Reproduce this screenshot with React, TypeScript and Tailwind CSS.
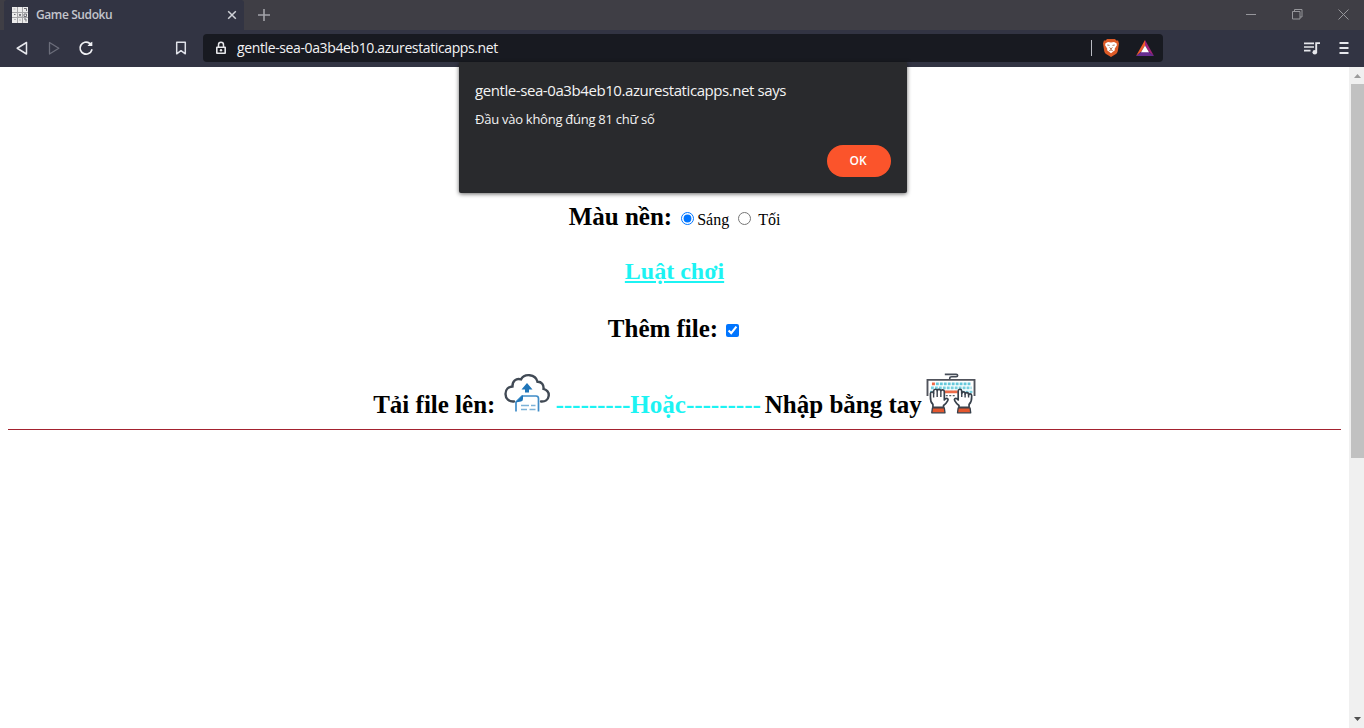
import React from "react";

function Favicon() {
  return (
    <svg className="size-4 shrink-0" viewBox="0 0 16 16">
      <rect width="16" height="16" fill="#ececec" />
      <path d="M5.500 0v16M10.500 0v16M0 5.500h16M0 10.500h16" stroke="#a5a5a8" />
      <path d="M12 1.500h2.500v2.500M7 7l2 2.500M9 7L7 9.500M12 7h2.500v2.500H12zM2 7.500h1.500M12 12h2v2.500" fill="none" stroke="#6f6f76" />
      <path d="M1.500 2h2M2 12.500h2M7 13h2" stroke="#b5b5b8" />
    </svg>
  );
}

function TabBar() {
  return (
    <div className="flex h-[30px] bg-[#3f3e45] pl-1">
      <div className="flex w-[240px] items-center rounded-t-[3px] bg-[#323443] pl-2">
        <Favicon />
        <span className="ml-2 w-[180px] whitespace-nowrap text-[12px] font-semibold leading-4 tracking-[-0.4px] text-[#c3c5cc]">Game Sudoku</span>
        <svg className="ml-[11px] size-[10px]" viewBox="0 0 10 10">
          <path d="M1.2 1.2l7.6 7.6M8.800 1.2l-7.6 7.6" stroke="#d0d2d8" strokeWidth="1.5" />
        </svg>
      </div>
      <div className="flex w-10 items-center justify-center">
        <svg className="size-3" viewBox="0 0 12 12">
          <path d="M6 0v12M0 6h12" stroke="#a3a3a9" strokeWidth="1.6" />
        </svg>
      </div>
      <div className="ml-auto flex items-center gap-[35px] pb-px pr-[15px]">
        <svg className="size-[11px]" viewBox="0 0 11 11"><path d="M0 5.5h10" stroke="#96969b" /></svg>
        <svg className="size-[11px]" viewBox="0 0 11 11" fill="none" stroke="#96969b">
          <path d="M.5 2.500h7.500v7.500h-7.500zM2.500 2.500v-2h7.500v7.500h-2" />
        </svg>
        <svg className="size-[11px]" viewBox="0 0 11 11"><path d="M.5.5l10 10M10.500.5l-10 10" stroke="#96969b" /></svg>
      </div>
    </div>
  );
}

function BraveLogo() {
  return (
    <svg className="h-[18px] w-4" viewBox="0 0 16 18">
      <path d="M4 0h8l1.300 1.400 1.800.2.900 3-1.200 7.300c-.3 1.700-1.200 2.500-2.300 3.400L8 18l-4.500-2.700c-1.100-.9-2-1.700-2.300-3.400L0 4.600l.9-3 1.800-.2z" fill="#dd5a26" />
      <path d="M2.500 4.200l2.500-1.200 3 .5 3-.5 2.500 1.200.4 2-2.200 3.500.2 1.500L8 14.200l-3.900-3 .2-1.500L2.100 6.200z" fill="#fff" />
      <path d="M4.300 6l2.200.4M11.700 6l-2.200.4M6.500 8.500L8 9.800l1.500-1.300M8 9.500v1.300M6.300 11.700l1.700-.9 1.700.9" fill="none" stroke="#a8603f" strokeWidth=".9" />
    </svg>
  );
}

function Toolbar() {
  return (
    <div className="flex h-[37px] items-center bg-[#323443] pb-px">
      <svg className="ml-4 h-4 w-3" viewBox="0 0 12 16" fill="none">
        <path d="M10.500 2.500v11.500L1.200 8.250z" stroke="#e6e7ec" strokeWidth="1.500" strokeLinejoin="round" />
      </svg>
      <svg className="ml-5 h-4 w-3" viewBox="0 0 12 16" fill="none">
        <path d="M1.500 2.500v11.500l9.300-5.750z" stroke="#6b6d7a" strokeWidth="1.300" strokeLinejoin="round" />
      </svg>
      <svg className="ml-[18px] size-4" viewBox="0 0 16 16" fill="none">
        <path d="M11.500 3.200A6 6 0 1 0 13.800 9.900" stroke="#f0f1f5" strokeWidth="1.700" strokeLinecap="round" />
        <path d="M9.500 6h4.800V1.800L12 3z" fill="#f0f1f5" />
      </svg>
      <svg className="ml-[81px] h-4 w-3" viewBox="0 0 12 16" fill="none">
        <path d="M1.700 2.200h8.600v11.600L6 10.700l-4.300 3.100z" stroke="#dfe1e8" strokeWidth="1.500" strokeLinejoin="round" />
      </svg>
      <div className="ml-4 flex h-7 w-[960px] items-center rounded-[4px] bg-[#181a21] pl-3">
        <svg className="h-[14px] w-3" viewBox="0 0 12 14">
          <path d="M3.500 6V3.700a2.500 2.500 0 0 1 5 0V6" fill="none" stroke="#e6e7ea" strokeWidth="1.500" />
          <path fillRule="evenodd" d="M2 5.500h8q1 0 1 1v5.500q0 1-1 1H2q-1 0-1-1V6.500q0-1 1-1zM2.600 7v4.500h6.800V7z" fill="#e6e7ea" />
          <circle cx="6" cy="9.200" r="1.200" fill="#e6e7ea" />
        </svg>
        <span className="ml-[10px] whitespace-nowrap text-[14px] leading-5 tracking-[-0.38px] text-[#f2f2f4]">gentle-sea-0a3b4eb10.azurestaticapps.net</span>
        <div className="ml-auto flex items-center pr-[9px]">
          <div className="h-4 w-px bg-[#b9bbc2]" />
          <div className="ml-[11px]"><BraveLogo /></div>
          <svg className="ml-[17px] h-4 w-[18px]" viewBox="0 0 18 16">
            <path d="M9 0L0 16l5-4 4-6.500z" fill="#f05a2b" />
            <path d="M9 0l9 16-5-4-4-6.500z" fill="#a2227a" />
            <path d="M0 16h18l-5-4H5z" fill="#662d91" />
            <path d="M9 5.500L5 12.300h8z" fill="#fff" />
          </svg>
        </div>
      </div>
      <div className="ml-auto flex items-center pr-[15px]">
        <svg className="h-[13px] w-[17px]" viewBox="0 0 17 13">
          <path d="M0 1.300h10M0 5h10M0 8.700h6.500" stroke="#e6e7ec" strokeWidth="1.700" />
          <path d="M12.200 10V1.100h3.800" fill="none" stroke="#e6e7ec" strokeWidth="1.900" />
          <circle cx="10.800" cy="10.200" r="2.300" fill="#e6e7ec" />
        </svg>
        <svg className="ml-[18px] h-3 w-[10px]" viewBox="0 0 10 12">
          <path d="M.5 1h9M.5 6h9M.5 11h9" stroke="#e6e7ec" strokeWidth="2" />
        </svg>
      </div>
    </div>
  );
}

function AlertDialog() {
  return (
    <div className="absolute left-[459px] top-[62px] z-10 flex h-[131px] w-[448px] flex-col rounded-b-[2px] bg-[#292a2d] px-4 pt-[17px] text-[#f3f3f3] shadow-[0_1px_4px_rgba(0,0,0,0.6)]">
      <div className="whitespace-nowrap text-[15px] leading-[22px] tracking-[-0.42px]">gentle-sea-0a3b4eb10.azurestaticapps.net says</div>
      <div className="mt-2 whitespace-nowrap text-[13px] leading-5 tracking-[-0.26px]">Đầu vào không đúng 81 chữ số</div>
      <button className="mt-4 flex h-8 w-16 items-center justify-center self-end rounded-full bg-[#fb542b] pr-[2px] text-[12px] font-semibold text-white">OK</button>
    </div>
  );
}

function CloudUpload() {
  return (
    <svg className="h-[40px] w-[46px] shrink-0" viewBox="0 0 46 40" fill="none">
      <path d="M10 28.500C5 29 1.500 25.500 1.500 21s3-7.200 7-7.500C8.300 8 12 5 17 6.400c3-6 14.500-6 16.500 2.400 4-.2 6.500 3 6 7 4 1.200 5.500 4 5.200 7-.5 4-3.700 6-7.700 5.700" stroke="#414a55" strokeWidth="2.400" strokeLinecap="round" />
      <path d="M23 10l-5.500 6.500H21v3h4v-3h3.500z" fill="#1f75b8" />
      <path d="M12 38.500V29l6-6H32c2 0 2.500 1 2.500 2.500v13" stroke="#3f8cc8" strokeWidth="1.700" />
      <path d="M11.500 29.500l7.500-7.500V26q0 2-2 2.500z" fill="#1f75b8" />
      <path d="M17 32.500h8M27 32.500h4.500M17 36.500h6M25.500 36.500h6" stroke="#7cb2d8" strokeWidth="1.400" />
    </svg>
  );
}

function LeftHand() {
  return (
    <g stroke="#37404b" strokeWidth="1.700" strokeLinejoin="round">
      <path d="M7 34.500v-3c-2-2-2.700-4.500-2.500-7.500v-3.500c.2-2 3-2 3.200 0v-2.500c.2-2.300 3.300-2.300 3.600-.3.400-2 3.500-1.800 3.700.4 .5-2 3.500-1.600 3.500.6V27l1.200-1.200c1.600-1.200 3.200.2 2.300 1.800-1.200 2.300-2.700 3.800-4.300 5v2z" fill="#fff" />
      <path d="M7.700 20.500v4M11.300 18v6M15 18.500v5.500" strokeWidth="1.400" />
      <path d="M6.500 35h12l.7 5H5.800z" fill="#e4572e" strokeWidth="1.300" />
    </g>
  );
}

function RightHand() {
  return (
    <g stroke="#37404b" strokeWidth="1.700" strokeLinejoin="round">
      <path d="M43.500 34.500v-3c2-2 2.800-4.500 2.600-7.500v-1.500c-.2-2-2.900-2-3.100-.3v-1c-.2-2-3.200-2-3.500-.2v-.8c-.4-1.800-3.200-1.800-3.400.2V18c-.4-2.500-3.600-2.300-3.600.2V27l-1.200-1.200c-1.600-1.200-3.200.2-2.300 1.800 1.200 2.300 2.700 3.800 4.300 5v2z" fill="#fff" />
      <path d="M43 22.200v2.300M39.500 21v3.500M36.100 20v4" strokeWidth="1.400" />
      <path d="M32.500 35h12l.7 5H31.800z" fill="#e4572e" strokeWidth="1.300" />
    </g>
  );
}

function Keyboard() {
  return (
    <svg className="h-[41px] w-[50px] shrink-0" viewBox="0 0 50.500 41" fill="none">
      <path d="M26 6.500V5c0-1.200-1-1.500-2-1.500h-4.500c-2 0-2-2.300 0-2.300H31" stroke="#454c57" strokeWidth="1.600" transform="translate(50 0) scale(-1 1)" />
      <path d="M1.500 23V6.700H49V23" stroke="#51545c" strokeWidth="1.900" />
      <path d="M10 10.800h35" stroke="#65c8db" strokeWidth="2.600" strokeDasharray="2.900 1.100" />
      <path d="M5 14.800h41" stroke="#78d0df" strokeWidth="2.600" strokeDasharray="2.900 1.100" />
      <path d="M4 18.800h43" stroke="#78d0df" strokeWidth="2.200" strokeDasharray="2.900 1.100" />
      <path d="M6 10.800h3M18 18.800h14" stroke="#ed6b48" strokeWidth="2.700" />
      <path d="M20 22.700h10" stroke="#52606a" strokeWidth="1.300" strokeDasharray="2 1.500" />
      <LeftHand />
      <RightHand />
    </svg>
  );
}

function Scrollbar() {
  return (
    <div className="flex w-[15px] flex-col items-center bg-[#f0f0f0]">
      <div className="flex h-[17px] items-center pl-px">
        <svg className="h-1 w-[7px]" viewBox="0 0 7 4"><path d="M0 4l3.500-4L7 4z" fill="#9b9b9b" /></svg>
      </div>
      <div className="h-[374px] w-[13px] translate-x-px bg-[#c1c1c1]" />
      <div className="mt-auto flex h-[18px] items-center pl-px">
        <svg className="h-1 w-[7px]" viewBox="0 0 7 4"><path d="M0 0h7L3.500 4z" fill="#505050" /></svg>
      </div>
    </div>
  );
}

const heading = "text-[25px] font-bold leading-[30px] whitespace-pre";

export default function App() {
  return (
    <div className="relative flex h-[728px] w-[1364px] flex-col overflow-hidden bg-white font-['Open_Sans','Noto_Sans',sans-serif]">
      <TabBar />
      <Toolbar />
      <div className="flex flex-1">
        <main className="flex-1 px-2 pt-[135px] font-['Liberation_Serif',serif] text-black">
          <div className="flex h-[30px] justify-center">
            <span className={heading}>Màu nền:</span>
            <label className="ml-[9px] flex items-center pt-1 text-[16px]">
              <input type="radio" name="theme" defaultChecked className="mb-px mr-[3px] size-[13px] accent-[#0075ff]" />
              <span className="pt-px">Sáng</span>
            </label>
            <label className="ml-[9px] flex items-center pt-1 text-[16px]">
              <input type="radio" name="theme" className="mb-px mr-[7px] size-[13px]" />
              <span className="pt-px">Tối</span>
            </label>
          </div>
          <div className="mt-[24px] flex h-[30px] justify-center">
            <a href="#" className="whitespace-pre text-[24px] font-bold leading-[30px] text-[#1cf3f3] underline">Luật chơi</a>
          </div>
          <div className="mt-[28px] flex h-[30px] items-center justify-center pr-[2px]">
            <span className={heading}>Thêm file:</span>
            <input type="checkbox" defaultChecked className="ml-2 mt-[2px] size-[13px] accent-[#0075ff]" />
          </div>
          <div className="mt-[29px] flex h-[47px] justify-center">
            <span className={`${heading} pt-[17px]`}>Tải file lên:</span>
            <div className="ml-[9px]"><CloudUpload /></div>
            <span className={`${heading} ml-[5px] pt-[17px] text-[#1cf3f3]`}>---------Hoặc---------</span>
            <span className={`${heading} ml-[4px] pt-[17px]`}>Nhập bằng tay</span>
            <div className="ml-[4px]"><Keyboard /></div>
          </div>
          <hr className="mt-[9px] h-px border-0 bg-[#a3222f]" />
        </main>
        <Scrollbar />
      </div>
      <AlertDialog />
    </div>
  );
}
